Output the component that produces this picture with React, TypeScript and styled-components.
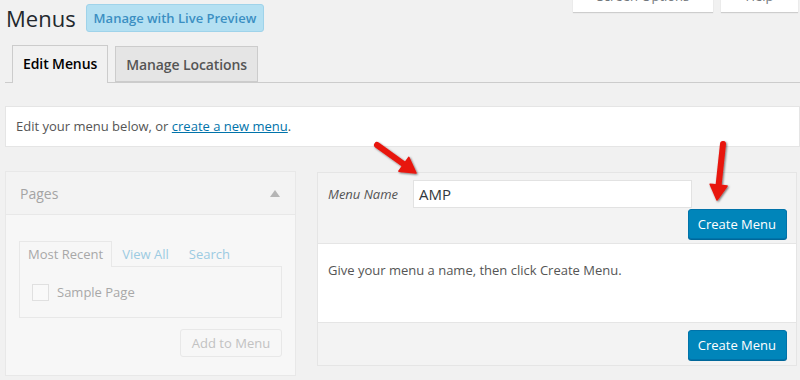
import React from "react";
import styled, { createGlobalStyle } from "styled-components";

const Global = createGlobalStyle`
  html, body { margin: 0; padding: 0; }
  body {
    background: #f1f1f1;
    font-family: "Open Sans", "Liberation Sans", sans-serif;
    font-size: 13px;
    color: #444;
  }
  * { box-sizing: border-box; }
`;

const Page = styled.div`
  position: relative;
  width: 800px;
  height: 380px;
  overflow: hidden;
  padding-left: 5px;
`;

const TopRow = styled.div`
  display: flex;
  align-items: center;
  padding-top: 4px;
  height: 32px;
`;

const Title = styled.h1`
  margin: 0 10px 0 1px;
  font-size: 22px;
  font-weight: 400;
  line-height: 28px;
  color: #23282d;
`;

const PreviewButton = styled.button`
  height: 28px;
  padding: 0 7px;
  border: 1px solid #9fd3ea;
  border-radius: 3px;
  background: #b4e0f2;
  color: #3b8fc2;
  font-family: inherit;
  font-size: 13px;
  font-weight: 600;
`;

const ScreenMeta = styled.div`
  margin-left: auto;
  align-self: flex-start;
  margin-top: -21px;
  display: flex;
  gap: 8px;
  padding-right: 2px;
`;

const MetaLink = styled.div<{ $w: number }>`
  width: ${(p) => p.$w}px;
  height: 29px;
  background: #fff;
  box-shadow: 0 1px 1px rgba(0, 0, 0, 0.15);
  color: #72777c;
  font-size: 13px;
  line-height: 26px;
  text-align: center;
`;

const NavTabs = styled.div`
  display: flex;
  gap: 7px;
  margin-top: 13px;
  padding-left: 7px;
  border-bottom: 1px solid #ccc;
  height: 38px;
  align-items: flex-end;
`;

const Tab = styled.div<{ $active?: boolean }>`
  height: ${(p) => (p.$active ? 38 : 36)}px;
  margin-bottom: ${(p) => (p.$active ? -1 : 0)}px;
  padding: 0 10px;
  border: 1px solid #ccc;
  border-bottom: ${(p) => (p.$active ? "none" : "1px solid #ccc")};
  background: ${(p) => (p.$active ? "#f1f1f1" : "#e5e5e5")};
  color: ${(p) => (p.$active ? "#000" : "#555")};
  font-size: 14px;
  font-weight: 600;
  line-height: 35px;
  letter-spacing: -0.1px;
`;

const Notice = styled.div`
  margin-top: 23px;
  background: #fff;
  border: 1px solid #e5e5e5;
  padding: 10px 10px;
  line-height: 19px;
  color: #555;
`;

const Link = styled.a`
  color: #0073aa;
  text-decoration: underline;
`;

const Columns = styled.div`
  display: flex;
  gap: 21px;
  margin-top: 24px;
  padding-right: 3px;
  align-items: flex-start;
`;

const SidePanel = styled.div`
  width: 291px;
  flex: none;
  border: 1px solid #e8e8e8;
  background: #f7f7f7;
`;

const SideHeader = styled.div`
  height: 43px;
  display: flex;
  align-items: center;
  justify-content: space-between;
  padding: 0 14px;
  background: #f3f3f3;
  border-bottom: 1px solid #e8e8e8;
  color: #a4a4a4;
  font-size: 14px;
`;

const Caret = styled.span`
  width: 0;
  height: 0;
  border-left: 5px solid transparent;
  border-right: 5px solid transparent;
  border-bottom: 7px solid #b5b5b5;
  margin-right: 1px;
`;

const SideBody = styled.div`
  padding: 26px 13px 18px;
`;

const InnerTabs = styled.div`
  display: flex;
  align-items: flex-end;
`;

const InnerTab = styled.div<{ $active?: boolean }>`
  height: 26px;
  padding: 0 ${(p) => (p.$active ? 8 : 9)}px;
  margin-bottom: -1px;
  border: 1px solid ${(p) => (p.$active ? "#e8e8e8" : "transparent")};
  border-bottom: none;
  background: ${(p) => (p.$active ? "#f7f7f7" : "transparent")};
  color: ${(p) => (p.$active ? "#a8a8a8" : "#9ccbe2")};
  line-height: 25px;
  position: relative;
  z-index: 1;
`;

const TabContent = styled.div`
  height: 52px;
  border: 1px solid #e8e8e8;
  display: flex;
  align-items: center;
  padding-left: 12px;
  gap: 8px;
  color: #a8a8a8;
`;

const Check = styled.span`
  width: 17px;
  height: 17px;
  border: 1px solid #e0e0e0;
  background: #f9f9f9;
`;

const SideActions = styled.div`
  display: flex;
  justify-content: flex-end;
  margin-top: 11px;
`;

const GhostButton = styled.button`
  height: 28px;
  width: 102px;
  border: 1px solid #e8e8e8;
  border-radius: 3px;
  background: #f7f7f7;
  color: #c2c2c2;
  font-family: inherit;
  font-size: 13px;
`;

const MainPanel = styled.div`
  flex: 1;
  margin-top: 1px;
  border: 1px solid #e5e5e5;
  background: #f3f3f3;
`;

const MainHeader = styled.div`
  padding: 7px 9px 4px 10px;
`;

const NameRow = styled.div`
  display: flex;
  align-items: center;
`;

const Label = styled.label`
  width: 85px;
  font-style: italic;
  color: #555;
`;

const NameInput = styled.div`
  width: 279px;
  height: 28px;
  background: #fff;
  border: 1px solid #e2e2e2;
  padding-left: 5px;
  font-size: 15px;
  line-height: 26px;
  color: #32373c;
`;

const ActionRow = styled.div<{ $pad?: string }>`
  display: flex;
  justify-content: flex-end;
  padding: ${(p) => p.$pad || "0"};
`;

const PrimaryButton = styled.button`
  height: 30px;
  padding: 0 10px 0 9px;
  border: 1px solid #0073aa;
  border-radius: 3px;
  background: #0085ba;
  box-shadow: 0 1px 0 #006799;
  color: #fff;
  font-family: inherit;
  font-size: 13px;
`;

const MainBody = styled.div`
  height: 80px;
  background: #fff;
  border-top: 1px solid #e5e5e5;
  border-bottom: 1px solid #e5e5e5;
  padding: 17px 10px;
  line-height: 19px;
  color: #555;
`;

const MainFooter = styled.div`
  padding: 7px 9px 5px;
`;

const Overlay = styled.svg`
  position: absolute;
  left: 0;
  top: 0;
  pointer-events: none;
`;

function Arrow({ x1, y1, tx, ty }: { x1: number; y1: number; tx: number; ty: number }) {
  const dx = tx - x1;
  const dy = ty - y1;
  const len = Math.hypot(dx, dy);
  const ux = dx / len;
  const uy = dy / len;
  const px = -uy;
  const py = ux;
  const hl = 15;
  const hw = 8.5;
  const bx = tx - ux * hl;
  const by = ty - uy * hl;
  return (
    <g filter="url(#sh)">
      <line x1={x1} y1={y1} x2={bx + ux * 2} y2={by + uy * 2} stroke="#e8150f" strokeWidth={6} strokeLinecap="round" />
      <polygon
        points={`${tx},${ty} ${bx + px * hw},${by + py * hw} ${bx - px * hw},${by - py * hw}`}
        fill="#e8150f"
        stroke="#e8150f"
        strokeWidth={1.5}
        strokeLinejoin="round"
      />
    </g>
  );
}

export default function App() {
  return (
    <Page>
      <Global />
      <TopRow>
        <Title>Menus</Title>
        <PreviewButton>Manage with Live Preview</PreviewButton>
        <ScreenMeta>
          <MetaLink $w={140}>Screen Options</MetaLink>
          <MetaLink $w={77}>Help</MetaLink>
        </ScreenMeta>
      </TopRow>
      <NavTabs>
        <Tab $active>Edit Menus</Tab>
        <Tab>Manage Locations</Tab>
      </NavTabs>
      <Notice>
        Edit your menu below, or <Link>create a new menu</Link>.
      </Notice>
      <Columns>
        <SidePanel>
          <SideHeader>
            Pages
            <Caret />
          </SideHeader>
          <SideBody>
            <InnerTabs>
              <InnerTab $active>Most Recent</InnerTab>
              <InnerTab>View All</InnerTab>
              <InnerTab>Search</InnerTab>
            </InnerTabs>
            <TabContent>
              <Check />
              Sample Page
            </TabContent>
            <SideActions>
              <GhostButton>Add to Menu</GhostButton>
            </SideActions>
          </SideBody>
        </SidePanel>
        <MainPanel>
          <MainHeader>
            <NameRow>
              <Label>Menu Name</Label>
              <NameInput>AMP</NameInput>
            </NameRow>
            <ActionRow $pad="1px 0 0">
              <PrimaryButton>Create Menu</PrimaryButton>
            </ActionRow>
          </MainHeader>
          <MainBody>Give your menu a name, then click Create Menu.</MainBody>
          <MainFooter>
            <ActionRow>
              <PrimaryButton>Create Menu</PrimaryButton>
            </ActionRow>
          </MainFooter>
        </MainPanel>
      </Columns>
      <Overlay width={800} height={380}>
        <defs>
          <filter id="sh" x="-20%" y="-20%" width="140%" height="140%">
            <feDropShadow dx="1" dy="1" stdDeviation="1" floodColor="#000" floodOpacity="0.55" />
          </filter>
        </defs>
        <Arrow x1={377} y1={145} tx={416} ty={173} />
        <Arrow x1={723} y1={144} tx={717} ty={200} />
      </Overlay>
    </Page>
  );
}
